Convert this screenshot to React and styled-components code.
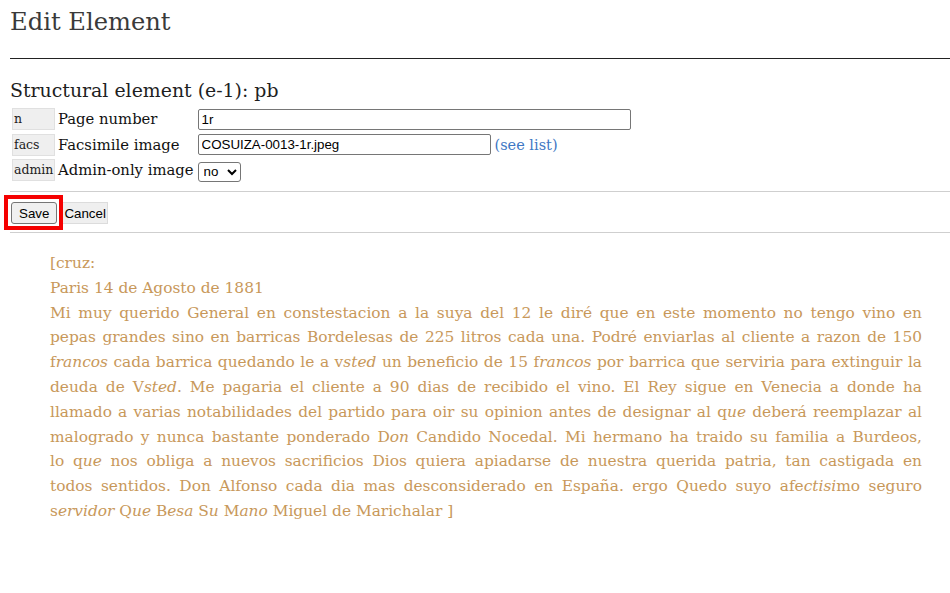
import React from "react";
import styled, { createGlobalStyle } from "styled-components";

const Global = createGlobalStyle`
  html, body { margin: 0; padding: 0; background: #fff; }
  body { font-family: "DejaVu Serif", "Liberation Serif", serif; color: #222; }
`;

const Page = styled.div`
  padding: 0 0 40px 10px;
`;

const Title = styled.h1`
  margin: 0;
  padding-top: 5px;
  height: 53px;
  font-weight: 400;
  font-size: 24.2px;
  line-height: 34px;
  color: #3a3a3a;
`;

const Rule = styled.hr`
  margin: 0;
  border: 0;
  border-top: 1px solid ${(p) => (p.$light ? "#cfcfcf" : "#222")};
`;

const Heading = styled.h2`
  margin: 18px 0 4px;
  font-weight: 400;
  font-size: 18.9px;
  line-height: 27px;
  color: #1f1f1f;
`;

const Fields = styled.div`
  display: grid;
  grid-template-columns: 43px max-content max-content;
  grid-auto-rows: 22px;
  column-gap: 3px;
  row-gap: 3.5px;
  padding-left: 2px;
  align-items: center;
`;

const Code = styled.div`
  height: 22px;
  box-sizing: border-box;
  background: #efefef;
  border: 1px solid #e0e0e0;
  font-size: 12.5px;
  line-height: 20px;
  padding-left: 1px;
  color: #222;
  overflow: hidden;
  white-space: nowrap;
`;

const Label = styled.div`
  font-size: 14.8px;
  line-height: 22px;
  color: #111;
  padding-right: 1px;
`;

const ValueCell = styled.div`
  display: flex;
  align-items: center;
  gap: 4px;
`;

const TextInput = styled.input`
  box-sizing: border-box;
  width: ${(p) => p.$w}px;
  height: 21px;
  border: 1px solid #767676;
  border-radius: 2px;
  padding: 1px 3px;
  font-family: "Liberation Sans", Arial, sans-serif;
  font-size: 13.33px;
  color: #000;
  background: #fff;
  outline: none;
`;

const Select = styled.select`
  box-sizing: border-box;
  width: 43px;
  height: 20px;
  margin-top: 3px;
  font-family: "Liberation Sans", Arial, sans-serif;
  font-size: 13.33px;
  border: 1px solid #767676;
  border-radius: 3px;
  background: #fff;
  color: #000;
  padding: 0 1px;
`;

const Link = styled.a`
  color: #3f78c4;
  font-size: 14.5px;
  text-decoration: none;
`;

const Buttons = styled.div`
  display: flex;
  gap: 5px;
  padding: 10px 0 8px 1px;
  margin-top: 10px;
  border-top: 1px solid #cfcfcf;
`;

const Highlight = styled.span`
  position: relative;
  display: inline-flex;
  &::after {
    content: "";
    position: absolute;
    top: -7px;
    left: -7px;
    right: -6px;
    bottom: -6px;
    border: 4px solid #f50000;
    pointer-events: none;
  }
`;

const Button = styled.button`
  height: 22px;
  margin: 0;
  padding: ${(p) => (p.$primary ? "1px 7px" : "1px 1px")};
  font-family: "Liberation Sans", Arial, sans-serif;
  font-size: 13.33px;
  color: #000;
  background: ${(p) => (p.$primary ? "#f0f0f0" : "#efefef")};
  border: 1px solid ${(p) => (p.$primary ? "#767676" : "#dcdcdc")};
  border-radius: ${(p) => (p.$primary ? "3px" : "0")};
`;

const Letter = styled.div`
  margin: 18px 28px 0 40px;
  color: #c8985a;
  font-size: 15.4px;
  line-height: 24.8px;
`;

const Line = styled.div`
  text-align: ${(p) => (p.$justify ? "justify" : "left")};
  text-align-last: ${(p) => (p.$justify ? "justify" : "left")};
  white-space: nowrap;
  i { font-style: italic; }
`;

export default function App() {
  return (
    <>
      <Global />
      <Page>
        <Title>Edit Element</Title>
        <Rule />
        <Heading>Structural element (e-1): pb</Heading>
        <Fields>
          <Code>n</Code>
          <Label>Page number</Label>
          <ValueCell>
            <TextInput $w={433} defaultValue="1r" />
          </ValueCell>
          <Code>facs</Code>
          <Label>Facsimile image</Label>
          <ValueCell>
            <TextInput $w={293} defaultValue="COSUIZA-0013-1r.jpeg" />
            <Link href="#">(see list)</Link>
          </ValueCell>
          <Code>admin</Code>
          <Label>Admin-only image</Label>
          <ValueCell>
            <Select defaultValue="no">
              <option value="no">no</option>
              <option value="yes">yes</option>
            </Select>
          </ValueCell>
        </Fields>
        <Buttons>
          <Highlight>
            <Button $primary>Save</Button>
          </Highlight>
          <Button>Cancel</Button>
        </Buttons>
        <Rule $light />
        <Letter>
          <Line>[cruz:</Line>
          <Line>Paris 14 de Agosto de 1881</Line>
          <Line $justify>Mi muy querido General en constestacion a la suya del 12 le diré que en este momento no tengo vino en</Line>
          <Line $justify>pepas grandes sino en barricas Bordelesas de 225 litros cada una. Podré enviarlas al cliente a razon de 150</Line>
          <Line $justify>f<i>rancos</i> cada barrica quedando le a v<i>sted</i> un beneficio de 15 f<i>rancos</i> por barrica que serviria para extinguir la</Line>
          <Line $justify>deuda de V<i>sted</i>. Me pagaria el cliente a 90 dias de recibido el vino. El Rey sigue en Venecia a donde ha</Line>
          <Line $justify>llamado a varias notabilidades del partido para oir su opinion antes de designar al q<i>ue</i> deberá reemplazar al</Line>
          <Line $justify>malogrado y nunca bastante ponderado D<i>on</i> Candido Nocedal. Mi hermano ha traido su familia a Burdeos,</Line>
          <Line $justify>lo q<i>ue</i> nos obliga a nuevos sacrificios Dios quiera apiadarse de nuestra querida patria, tan castigada en</Line>
          <Line $justify>todos sentidos. Don Alfonso cada dia mas desconsiderado en España. ergo Quedo suyo afe<i>ctisi</i>mo seguro</Line>
          <Line>s<i>ervidor</i> Q<i>ue</i> B<i>esa</i> S<i>u</i> M<i>ano</i> Miguel de Marichalar ]</Line>
        </Letter>
      </Page>
    </>
  );
}
